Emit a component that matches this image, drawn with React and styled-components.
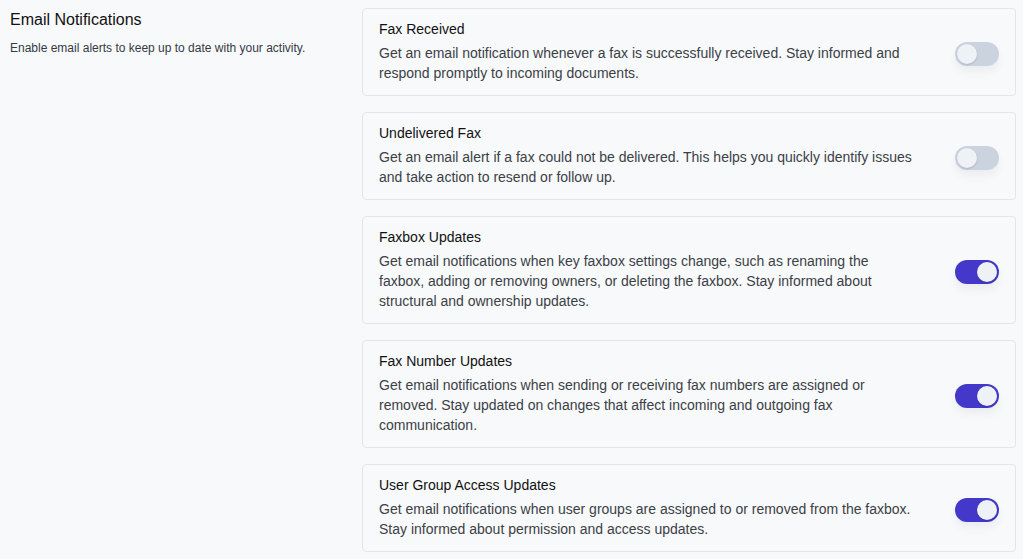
import { useState } from "react";
import styled, { createGlobalStyle } from "styled-components";

const Global = createGlobalStyle`
  html, body {
    margin: 0;
    background: #f8f9fb;
    font-family: "Liberation Sans", Arial, sans-serif;
  }
`;

const Page = styled.div`
  display: grid;
  grid-template-columns: 352px 654px;
  padding: 8px 7px 0 10px;
`;

const Intro = styled.div`
  padding-top: 2px;
`;

const Heading = styled.h2`
  margin: 0;
  font-size: 16px;
  font-weight: 400;
  line-height: 20px;
  color: #111;
`;

const Lead = styled.p`
  margin: 10px 0 0;
  font-size: 12px;
  line-height: 16px;
  color: #333a45;
`;

const List = styled.div`
  display: flex;
  flex-direction: column;
  gap: 16px;
`;

const Card = styled.div`
  display: flex;
  align-items: center;
  padding: 10px 16px 12px;
  background: #f8f9fb;
  border: 1px solid #e2e5eb;
  border-radius: 4px;
`;

const Body = styled.div`
  flex: 1;
`;

const Title = styled.div`
  font-size: 14px;
  line-height: 20px;
  color: #111;
  margin-bottom: 4px;
`;

const Text = styled.div`
  font-size: 14px;
  line-height: 20px;
  color: #3b3f46;
`;

const Switch = styled.button`
  position: relative;
  flex: none;
  width: 44px;
  height: 24px;
  margin: 6px 0 0 40px;
  padding: 0;
  border: none;
  border-radius: 12px;
  background: ${(p) => (p.on ? "#4338ca" : "#cbd3df")};
  cursor: pointer;
  box-shadow: 0 6px 10px rgba(15, 23, 42, 0.05);

  &::after {
    content: "";
    position: absolute;
    top: 2px;
    left: ${(p) => (p.on ? "22px" : "2px")};
    width: 20px;
    height: 20px;
    border-radius: 50%;
    background: #eef1f6;
    box-shadow: 0 1px 2px rgba(0, 0, 0, 0.15);
    transition: left 0.15s;
  }
`;

const items = [
  {
    title: "Fax Received",
    text: "Get an email notification whenever a fax is successfully received. Stay informed and respond promptly to incoming documents.",
    on: false,
  },
  {
    title: "Undelivered Fax",
    text: "Get an email alert if a fax could not be delivered. This helps you quickly identify issues and take action to resend or follow up.",
    on: false,
  },
  {
    title: "Faxbox Updates",
    text: "Get email notifications when key faxbox settings change, such as renaming the faxbox, adding or removing owners, or deleting the faxbox. Stay informed about structural and ownership updates.",
    on: true,
  },
  {
    title: "Fax Number Updates",
    text: "Get email notifications when sending or receiving fax numbers are assigned or removed. Stay updated on changes that affect incoming and outgoing fax communication.",
    on: true,
  },
  {
    title: "User Group Access Updates",
    text: "Get email notifications when user groups are assigned to or removed from the faxbox. Stay informed about permission and access updates.",
    on: true,
  },
];

const App = () => {
  const [state, setState] = useState(items.map((i) => i.on));

  const toggle = (idx) => {
    setState((s) => s.map((v, i) => (i === idx ? !v : v)));
  };

  return (
    <>
      <Global />
      <Page>
        <Intro>
          <Heading>Email Notifications</Heading>
          <Lead>Enable email alerts to keep up to date with your activity.</Lead>
        </Intro>
        <List>
          {items.map((item, i) => (
            <Card key={item.title}>
              <Body>
                <Title>{item.title}</Title>
                <Text>{item.text}</Text>
              </Body>
              <Switch on={state[i] ? 1 : 0} onClick={() => toggle(i)} />
            </Card>
          ))}
        </List>
      </Page>
    </>
  );
};

export default App;
